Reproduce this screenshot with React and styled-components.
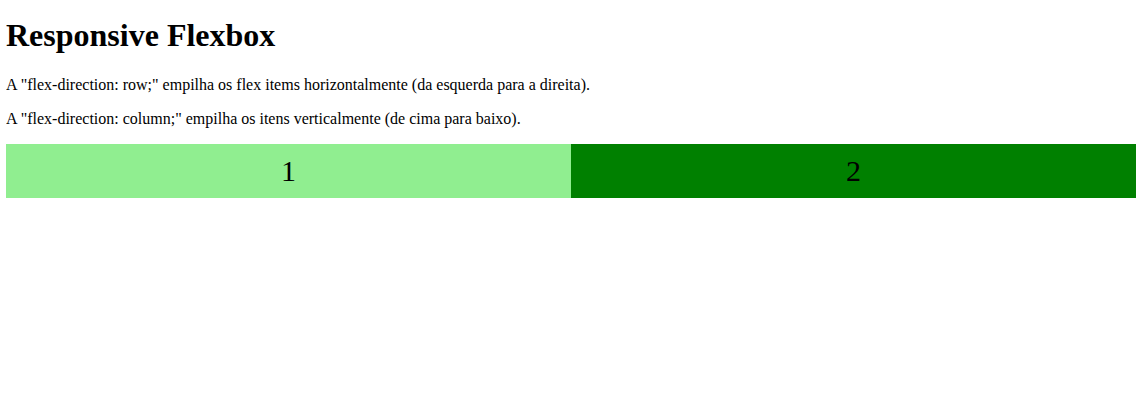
import React from "react";
import styled, { createGlobalStyle } from "styled-components";

const Global = createGlobalStyle`
  body {
    margin: 6px;
    font-family: "Liberation Serif", "Times New Roman", serif;
    background: #fff;
    color: #000;
  }
`;

const Title = styled.h1`
  font-size: 32px;
  margin: 11.44px 0 21.44px;
  font-weight: bold;
`;

const Para = styled.p`
  font-size: 16px;
  margin: 16px 0;
`;

const FlexRow = styled.div`
  display: flex;
  flex-direction: row;
`;

const Item = styled.div`
  flex: 1;
  background-color: ${(p) => p.$bg};
  text-align: center;
  font-size: 30px;
  line-height: 54px;
  height: 54px;
`;

export default function App() {
  return (
    <>
      <Global />
      <Title>Responsive Flexbox</Title>
      <Para>A "flex-direction: row;" empilha os flex items horizontalmente (da esquerda para a direita).</Para>
      <Para>A "flex-direction: column;" empilha os itens verticalmente (de cima para baixo).</Para>
      <FlexRow>
        <Item $bg="lightgreen">1</Item>
        <Item $bg="green">2</Item>
      </FlexRow>
    </>
  );
}
